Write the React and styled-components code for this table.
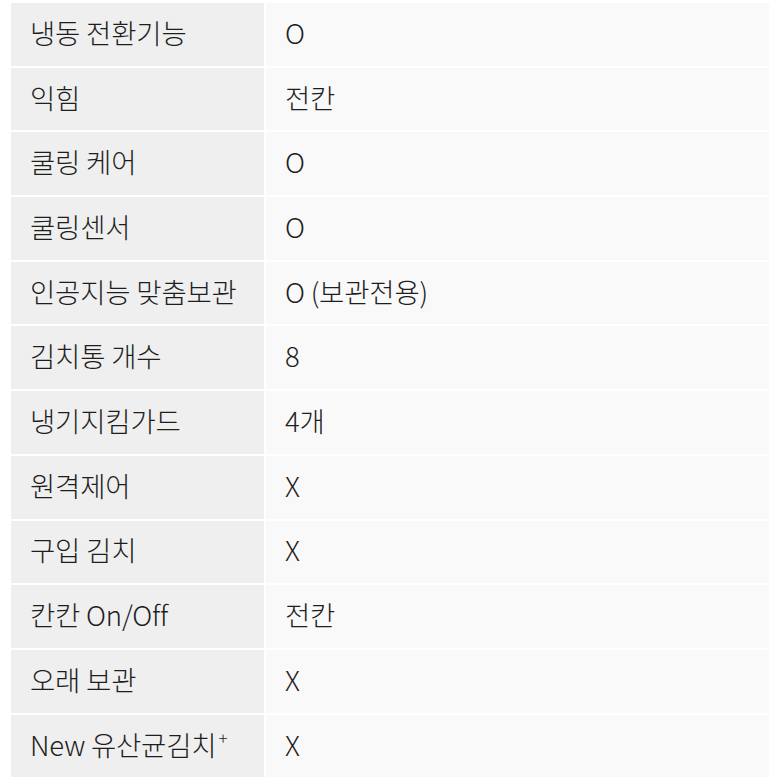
import React from "react";
import styled, { createGlobalStyle } from "styled-components";

const GlobalStyle = createGlobalStyle`
  html, body {
    margin: 0;
    padding: 0;
    background: #fff;
  }
  body {
    font-family: "Noto Sans CJK KR", "Noto Sans", sans-serif;
  }
`;

const Table = styled.div`
  display: grid;
  grid-template-columns: 253px 503px;
  grid-auto-rows: 62.7px;
  gap: 2px;
  padding: 3px 0 0 11px;
`;

const Cell = styled.div`
  display: flex;
  align-items: center;
  padding: 0 0 3px 19px;
  background: ${(p) => (p.$head ? "#efefef" : "#f9f9f9")};
  color: #1e1e1e;
  font-size: 27.5px;
  font-weight: 300;
  letter-spacing: -0.2px;
  white-space: nowrap;
`;

const Text = styled.span`
  line-height: 1.3;
`;

const Sup = styled.span`
  font-size: 17px;
  line-height: 0;
  vertical-align: 11px;
  margin-left: 2px;
`;

const rows = [
  ["냉동 전환기능", "O"],
  ["익힘", "전칸"],
  ["쿨링 케어", "O"],
  ["쿨링센서", "O"],
  ["인공지능 맞춤보관", "O (보관전용)"],
  ["김치통 개수", "8"],
  ["냉기지킴가드", "4개"],
  ["원격제어", "X"],
  ["구입 김치", "X"],
  ["칸칸 On/Off", "전칸"],
  ["오래 보관", "X"],
  [
    <>
      New 유산균김치<Sup>+</Sup>
    </>,
    "X",
  ],
];

export default function App() {
  return (
    <>
      <GlobalStyle />
      <Table>
        {rows.map(([label, value], i) => (
          <React.Fragment key={i}>
            <Cell $head>
              <Text>{label}</Text>
            </Cell>
            <Cell>
              <Text>{value}</Text>
            </Cell>
          </React.Fragment>
        ))}
      </Table>
    </>
  );
}
